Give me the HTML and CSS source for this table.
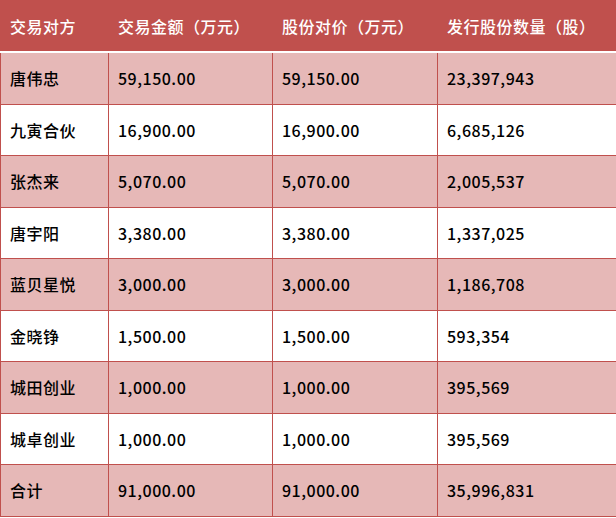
FILE: index.html
```html
<!DOCTYPE html>
<html lang="zh-CN">
<head>
<meta charset="utf-8">
<link rel="stylesheet" href="styles.css">
</head>
<body>
<div class="table">
  <div class="cell head">交易对方</div>
  <div class="cell head">交易金额（万元）</div>
  <div class="cell head">股份对价（万元）</div>
  <div class="cell head">发行股份数量（股）</div>

  <div class="cell pink">唐伟忠</div>
  <div class="cell pink">59,150.00</div>
  <div class="cell pink">59,150.00</div>
  <div class="cell pink">23,397,943</div>

  <div class="cell">九寅合伙</div>
  <div class="cell">16,900.00</div>
  <div class="cell">16,900.00</div>
  <div class="cell">6,685,126</div>

  <div class="cell pink">张杰来</div>
  <div class="cell pink">5,070.00</div>
  <div class="cell pink">5,070.00</div>
  <div class="cell pink">2,005,537</div>

  <div class="cell">唐宇阳</div>
  <div class="cell">3,380.00</div>
  <div class="cell">3,380.00</div>
  <div class="cell">1,337,025</div>

  <div class="cell pink">蓝贝星悦</div>
  <div class="cell pink">3,000.00</div>
  <div class="cell pink">3,000.00</div>
  <div class="cell pink">1,186,708</div>

  <div class="cell">金晓铮</div>
  <div class="cell">1,500.00</div>
  <div class="cell">1,500.00</div>
  <div class="cell">593,354</div>

  <div class="cell pink">城田创业</div>
  <div class="cell pink">1,000.00</div>
  <div class="cell pink">1,000.00</div>
  <div class="cell pink">395,569</div>

  <div class="cell">城卓创业</div>
  <div class="cell">1,000.00</div>
  <div class="cell">1,000.00</div>
  <div class="cell">395,569</div>

  <div class="cell pink">合计</div>
  <div class="cell pink">91,000.00</div>
  <div class="cell pink">91,000.00</div>
  <div class="cell pink">35,996,831</div>
</div>
</body>
</html>
```

FILE: styles.css
```css
html, body {
  margin: 0;
  padding: 0;
  background: #ffffff;
}

.table {
  display: grid;
  grid-template-columns: 108px 164px 165px 179px;
  grid-template-rows: 53px;
  grid-auto-rows: 51.5px;
  width: 616px;
  font-family: "Noto Sans CJK SC", "Noto Sans", sans-serif;
  font-size: 16px;
  font-weight: 500;
  letter-spacing: 0.5px;
  color: #000000;
}

.cell {
  box-sizing: border-box;
  display: flex;
  align-items: center;
  padding-left: 9px;
  border-left: 1px solid #c0504d;
  border-bottom: 1px solid #c0504d;
  background: #ffffff;
  white-space: nowrap;
}

.cell.pink {
  background: #e6b8b7;
}

.cell.head {
  background: #c0504d;
  color: #ffffff;
  border-left: none;
  border-bottom: 2px solid #ffffff;
  padding-left: 10px;
}
```
